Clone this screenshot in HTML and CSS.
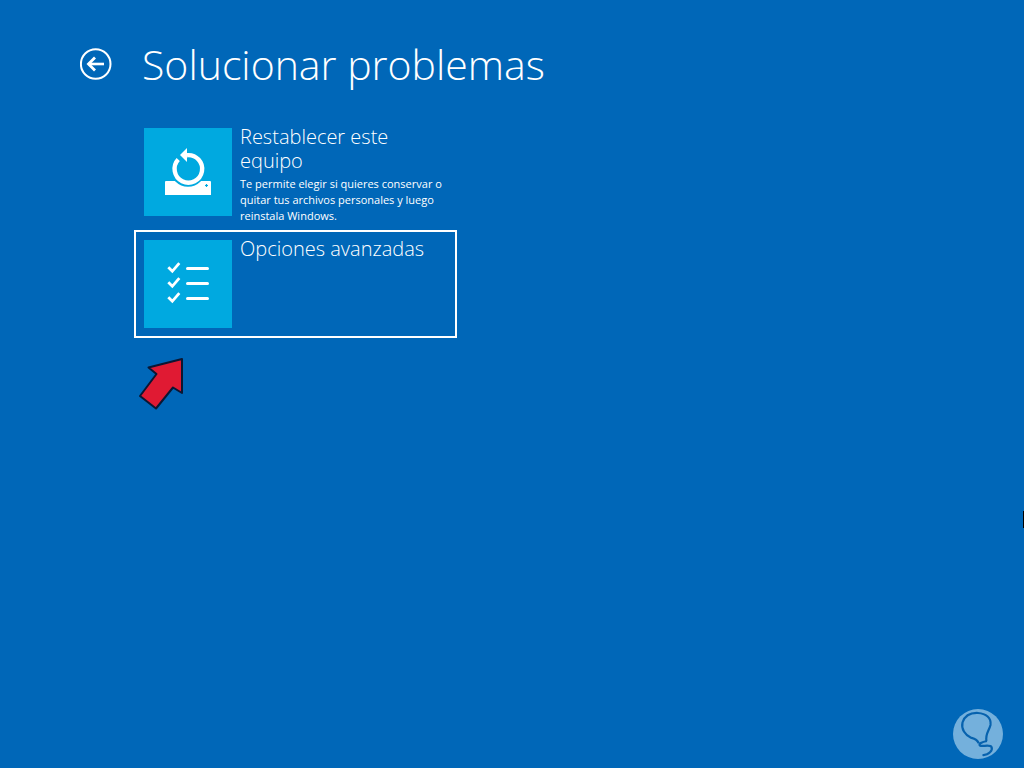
FILE: index.html
```
<!DOCTYPE html>
<html lang="es">
<head>
    <meta charset="utf-8">
    <title>Solucionar problemas</title>
    <link rel="stylesheet" href="styles.css">
</head>
<body>
    <header class="page-header">
        <button class="back-button" type="button" aria-label="Atrás">
            <svg width="32" height="32" viewBox="0 0 32 32" fill="none" stroke="#fff">
                <circle cx="15.700" cy="16" r="14.8" stroke-width="2"/>
                <path d="M8.500 16H24" stroke-width="2.6"/>
                <path d="M15 9.500L8.500 16l6.500 6.500" stroke-width="2.8"/>
            </svg>
        </button>
        <h1>Solucionar problemas</h1>
    </header>

    <main class="options">
        <button class="option" type="button">
            <span class="option-icon">
                <svg width="88" height="88" viewBox="0 0 88 88">
                    <path d="M22 53h44q1 0 1 1v13H21V54q0-1 1-1z" fill="#fff"/>
                    <circle cx="44" cy="41" r="17.8" fill="#00a9e0"/>
                    <path d="M34.2 31.6A13.8 13.8 0 1 0 43 27.2" fill="none" stroke="#fff" stroke-width="4.4"/>
                    <path d="M36 27l7-7v14z" fill="#fff"/>
                    <path d="M61 57.5h3M62.5 56v3" stroke="#00a9e0" stroke-width="1.2"/>
                </svg>
            </span>
            <span class="option-text">
                <span class="option-title">Restablecer este equipo</span>
                <span class="option-description">Te permite elegir si quieres conservar o quitar tus archivos personales y luego reinstala Windows.</span>
            </span>
        </button>

        <button class="option selected" type="button">
            <span class="option-icon">
                <svg width="88" height="88" viewBox="0 0 88 88" fill="none" stroke="#fff">
                    <path d="M24.3 27.3l4 4 7-8.2M24.3 42.3l4 4 7-8.2M24.3 57.3l4 4 7-8.2" stroke-width="2.8"/>
                    <path d="M43.5 28.5h20M43.5 43.5h20M43.5 58.5h20" stroke-width="3" stroke-linecap="round"/>
                </svg>
            </span>
            <span class="option-text">
                <span class="option-title">Opciones avanzadas</span>
            </span>
        </button>
    </main>

    <!-- Overlays -->
    <svg class="pointer-arrow" width="64" height="64" viewBox="0 0 64 64">
        <path d="M18.500 17.5L52 9V43L43 37.5L26 58.5L10 46L26.500 24Z" fill="#e01a33" stroke="#0b1733" stroke-width="2" stroke-linejoin="round"/>
    </svg>
    <svg class="watermark" width="50" height="50" viewBox="0 0 50 50" fill="none">
        <circle cx="25" cy="25" r="25" fill="#74b0dc"/>
        <path d="M25.8 34.3C24 30 21 29.5 18 28.700C12 26 8 20 9.500 13.5C12 6 18 3.7 25 4C33 4.5 38.500 9 37.5 16C36 22 32 25 33.5 32" stroke="#0762ae" stroke-width="2.2"/>
        <path d="M34 32C29 33 25 35 27 36.5C29 38 37 35 38.5 38C40 41 36 46.5 29.5 46" stroke="#0762ae" stroke-width="2.2"/>
    </svg>
    <div class="edge-mark"></div>
</body>
</html>
```
FILE: styles.css
```
body {
    margin: 0;
    padding: 32px 0 0;
    min-height: 100vh;
    box-sizing: border-box;
    background-color: #0067b8;
    color: #fff;
    font-family: "Open Sans", "Noto Sans", sans-serif;
}

button {
    border: none;
    background: none;
    color: inherit;
    font-family: inherit;
    cursor: pointer;
}

svg {
    display: block;
}

.page-header {
    display: flex;
    align-items: center;
    gap: 30px;
    padding-left: 80px;
}

.back-button {
    padding: 0;
}

h1 {
    margin: 0;
    font-size: 41px;
    line-height: 64px;
    font-weight: 300;
}

.options {
    display: flex;
    flex-direction: column;
    align-items: flex-start;
    gap: 4px;
    margin-top: 22px;
    padding-left: 134px;
}

.option {
    display: flex;
    align-items: flex-start;
    gap: 8px;
    box-sizing: border-box;
    width: 323px;
    height: 108px;
    padding: 8px;
    border: 2px solid transparent;
    text-align: left;
}

.option.selected {
    border-color: #fff;
}

.option-icon {
    flex: none;
    background-color: #00a9e0;
}

.option-text {
    display: flex;
    flex-direction: column;
    gap: 3px;
    margin-top: -3px;
}

.option-title {
    max-width: 190px;
    font-size: 20px;
    line-height: 24px;
    font-weight: 300;
}

.option-description {
    font-size: 11px;
    line-height: 16px;
}

/* things lying over the page */
.pointer-arrow {
    position: absolute;
    left: 130px;
    top: 350px;
}

.watermark {
    position: absolute;
    right: 21px;
    bottom: 9px;
}

.edge-mark {
    position: absolute;
    right: 0;
    top: 511px;
    width: 1px;
    height: 17px;
    background-color: #000;
}
```
